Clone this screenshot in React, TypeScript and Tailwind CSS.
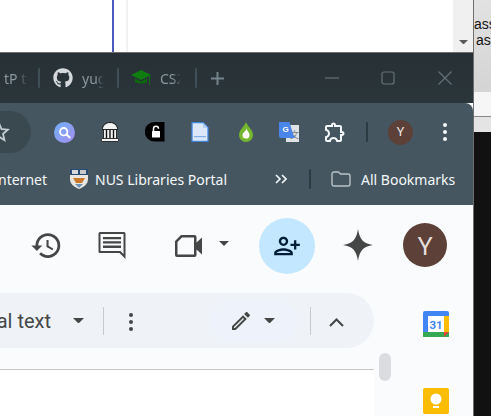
import React from "react";
import { FaGithub } from "react-icons/fa";

const Caret = ({ color = "#444746", w = 10 }: { color?: string; w?: number }) => (
  <svg width={w} height={w / 2} viewBox="0 0 10 5"><path d="M0 0h10L5 5z" fill={color} /></svg>
);

const Path = ({ d, size = 24, fill = "#444746", vb = "0 0 24 24", className = "" }: { d: string; size?: number; fill?: string; vb?: string; className?: string }) => (
  <svg width={size} height={size} viewBox={vb} className={className}><path d={d} fill={fill} /></svg>
);

const TabSep = () => <div className="w-[2px] h-[20px] rounded bg-[#3f4f58]" />;

export default function App() {
  return (
    <div className="w-[491px] h-[416px] overflow-hidden flex bg-white font-['Noto_Sans',sans-serif]">
      <div className="w-[474px] shrink-0 flex flex-col border-r border-[#6e6e6e]">
        {/* document behind the window */}
        <div className="h-[52px] flex bg-white">
          <div className="w-[112px]" />
          <div className="w-[2px] bg-[#4b5bbd]" />
          <div className="w-[12px]" />
          <div className="w-[2px] bg-[#f2f2f2]" />
          <div className="flex-1" />
          <div className="w-[20px] bg-[#f0f0f0] flex items-end justify-center pb-[8px]">
            <Caret color="#5a5a5a" w={9} />
          </div>
        </div>
        {/* browser window */}
        <div className="flex-1 flex flex-col border-t-[1px] border-[#6e6e6e]">
          <div className="h-[50px] bg-gradient-to-b from-[#263035] to-[#2b363c] flex items-center text-[#8b979e] text-[14px]">
            <span className="w-[38px] pl-[4px] whitespace-nowrap overflow-hidden [mask-image:linear-gradient(90deg,black_45%,transparent_72%)]">tP tea</span>
            <TabSep />
            <FaGithub className="ml-[13px] text-[#d5d9db]" size={20} />
            <span className="w-[22px] ml-[9px] overflow-hidden whitespace-nowrap [mask-image:linear-gradient(90deg,black_60%,transparent)]">yuggy</span>
            <div className="w-[13px]" />
            <TabSep />
            <svg className="ml-[12px]" width="20" height="18" viewBox="0 0 20 18">
              <path d="M10 1 20 6l-10 5L0 6z" fill="#0f7d0f" />
              <path d="M4 9.5v3.2C6 15 14 15 16 12.7V9.5l-6 3z" fill="#0b6b0b" />
              <path d="M18.6 7v9" stroke="#0f7d0f" strokeWidth="0.8" />
            </svg>
            <span className="w-[21px] ml-[9px] overflow-hidden whitespace-nowrap [mask-image:linear-gradient(90deg,black_60%,transparent)]">CS2103</span>
            <div className="w-[14px]" />
            <TabSep />
            <svg className="ml-[14px]" width="13" height="13" viewBox="0 0 13 13"><path d="M6.5 0v13M0 6.5h13" stroke="#75838b" strokeWidth="2" /></svg>
            <svg className="ml-[101px]" width="14" height="2" viewBox="0 0 14 2"><path d="M0 1h14" stroke="#66737a" strokeWidth="1.2" /></svg>
            <svg className="ml-[42px]" width="14" height="14" viewBox="0 0 14 14"><rect x="1" y="1" width="12" height="12" rx="2" fill="none" stroke="#66737a" strokeWidth="1.2" /></svg>
            <svg className="ml-[43px]" width="14" height="14" viewBox="0 0 14 14"><path d="M0.5 0.5l13 13M13.5 0.5l-13 13" stroke="#66737a" strokeWidth="1.1" /></svg>
          </div>
          <div className="h-[102px] bg-[#455660] rounded-tr-[8px] flex flex-col text-[#f4f8fa] overflow-hidden">
            <div className="pt-[8px] flex items-center">
              <div className="w-[31px] h-[42px] rounded-r-full bg-[#3a4850] flex items-center overflow-hidden">
                <svg className="-ml-[12px] shrink-0" width="22" height="22" viewBox="2 2 20 20"><path d="M22 9.24l-7.190-.62L12 2 9.190 8.630 2 9.240l5.460 4.730L5.820 21 12 17.270 18.180 21l-1.630-7.030L22 9.240zM12 15.400l-3.760 2.270 1-4.280-3.320-2.880 4.380-.38L12 6.100l1.710 4.040 4.380.38-3.320 2.880 1 4.280L12 15.400z" fill="#c3ccd0" /></svg>
              </div>
              <div className="w-[11px]" />
              <div className="w-[45px] flex justify-center">
                <svg width="21" height="21" viewBox="0 0 21 21">
                  <defs><linearGradient id="g" x1="0" y1="0" x2="1" y2="1"><stop offset="0" stopColor="#6fb2f7" /><stop offset="1" stopColor="#a58cf0" /></linearGradient></defs>
                  <circle cx="10.5" cy="10.5" r="10.5" fill="url(#g)" />
                  <circle cx="9.7" cy="9.7" r="3.7" fill="none" stroke="#fff" strokeWidth="1.8" />
                  <path d="M12.5 12.5l3.7 3.5" stroke="#fff" strokeWidth="2" />
                </svg>
              </div>
              <div className="w-[45px] flex justify-center">
                <svg width="18" height="20" viewBox="0 0 18 20">
                  <path d="M1.500 6.500C2 3 5 .5 9 .5s7 2.500 7.500 6V7.500h-15z" fill="#f2f2f2" stroke="#111" />
                  <rect x="2.500" y="7.500" width="13" height="9.500" fill="#f2f2f2" stroke="#111" strokeWidth=".8" />
                  <path d="M5.500 8v8.500M9 8v8.500M12.500 8v8.500" stroke="#111" strokeWidth="1.400" />
                  <rect x=".5" y="16.500" width="17" height="3" rx=".8" fill="#f2f2f2" stroke="#111" strokeWidth=".8" />
                </svg>
              </div>
              <div className="w-[45px] flex justify-center">
                <svg width="20" height="20" viewBox="0 0 20 20">
                  <path d="M9.500 0H19.500V19.500H9.500A9.750 9.750 0 0 1 9.500 0z" fill="#000" />
                  <rect x="7" y="9" width="8" height="6.500" rx=".5" fill="#fff" />
                  <path d="M8.500 9V6.800a2.500 2.500 0 0 1 5 0" fill="none" stroke="#fff" strokeWidth="1.500" />
                </svg>
              </div>
              <div className="w-[45px] flex justify-center">
                <svg width="18" height="20" viewBox="0 0 18 20">
                  <path d="M1 .7h11l5 5V19.300H1z" fill="#dbe8fb" stroke="#3f86dd" strokeWidth="1.300" />
                  <path d="M12 .7v5h5z" fill="#aecbf3" />
                  <rect x="3" y="14" width="12" height="1.200" fill="#7fb0ea" />
                </svg>
              </div>
              <div className="w-[47px] flex justify-center">
                <svg width="14" height="20" viewBox="0 0 14 20">
                  <path d="M7 0C9 5 14 8 14 13a7 7 0 0 1-14 0C0 8 5 5 7 0z" fill="#74b62e" />
                  <path d="M7 6c.5 2.500 3.500 4 3.500 7.200A3.500 3.500 0 0 1 3.500 13C3.500 11 5 11 5.300 9.500 6.500 10 7 8 7 6z" fill="#fff" />
                </svg>
              </div>
              <div className="w-[40px] flex justify-center">
                <svg width="21" height="21" viewBox="0 0 21 21">
                  <path d="M7 3h13v17H7z" fill="#dfe3e6" />
                  <text x="11" y="16" fontSize="9" fill="#777" fontFamily="Noto Sans CJK SC">文</text>
                  <path d="M0 0h10.500l4 13.500L16 16H2a2 2 0 0 1-2-2z" fill="#4a85ea" />
                  <text x="3.600" y="10" fontSize="8" fontWeight="700" fill="#fff" fontFamily="Liberation Sans">G</text>
                </svg>
              </div>
              <div className="w-[52px] flex justify-center">
                <Path size={24} fill="#f4f8fa" d="M10.500 4.500c.28 0 .5.22.5.5v2h6v6h2c.28 0 .5.22.5.5s-.22.5-.5.5h-2v6h-2.120c-.68-1.750-2.390-3-4.380-3s-3.700 1.250-4.380 3H4v-2.120c1.750-.68 3-2.390 3-4.380 0-1.990-1.240-3.700-2.990-4.380L4 7h6V5c0-.28.22-.5.5-.5m0-2C9.120 2.500 8 3.620 8 5H4c-1.100 0-1.990.9-1.990 2v3.800h.29c1.490 0 2.700 1.210 2.700 2.700s-1.210 2.700-2.700 2.700H2V20c0 1.100.9 2 2 2h3.800v-.3c0-1.490 1.210-2.700 2.700-2.700s2.700 1.210 2.700 2.700v.3H17c1.100 0 2-.9 2-2v-4c1.380 0 2.500-1.120 2.500-2.500S20.380 11 19 11V7c0-1.100-.9-2-2-2h-4c0-1.380-1.120-2.500-2.500-2.500z" />
              </div>
              <div className="ml-[5px] w-[2px] h-[20px] rounded bg-[#2c3a42]" />
              <div className="ml-[20px] w-[25px] h-[25px] rounded-full bg-[#5d4037] flex items-center justify-center text-[13px] text-[#f3eeec]">Y</div>
              <div className="ml-[30px] w-[4px] flex flex-col gap-[3px]">
                <div className="w-[4px] h-[4px] rounded-full bg-[#f4f8fa]" />
                <div className="w-[4px] h-[4px] rounded-full bg-[#f4f8fa]" />
                <div className="w-[4px] h-[4px] rounded-full bg-[#f4f8fa]" />
              </div>
            </div>
            <div className="mt-[12px] flex items-center h-[28px] text-[14px] whitespace-nowrap">
              <span className="w-[47px] flex justify-end">nternet</span>
              <svg className="ml-[23px]" width="18" height="20" viewBox="0 0 18 20">
                <path d="M0 0h18v10c0 5-4 8-9 10-5-2-9-5-9-10z" fill="#e9e6df" />
                <rect x="0" y="0" width="18" height="6" fill="#2a4a78" />
                <rect x="2" y="1" width="6" height="4" fill="#d9d9d9" />
                <rect x="10" y="1" width="6" height="4" fill="#c9c9c9" />
                <path d="M3 9l12 0-3 5-6 0z" fill="#c9792a" />
                <path d="M5 15h8l-4 4z" fill="#6d8fb3" />
              </svg>
              <span className="ml-[7px] w-[132px]">NUS Libraries Portal</span>
              <svg className="ml-[48px]" width="12" height="10" viewBox="0 0 12 10"><path d="M1 1l4 4-4 4M7 1l4 4-4 4" fill="none" stroke="#f4f8fa" strokeWidth="1.600" /></svg>
              <div className="ml-[22px] w-[2px] h-[20px] rounded bg-[#2c3a42]" />
              <svg className="ml-[20px]" width="20" height="16" viewBox="0 0 20 16"><path d="M1 3a2 2 0 0 1 2-2h4.500l2 2H17a2 2 0 0 1 2 2v8a2 2 0 0 1-2 2H3a2 2 0 0 1-2-2z" fill="none" stroke="#b9c2c7" strokeWidth="1.400" /></svg>
              <span className="ml-[10px]">All Bookmarks</span>
            </div>
          </div>
          {/* docs page */}
          <div className="flex-1 bg-[#fafbfd] flex flex-col overflow-hidden">
            <div className="h-[88px] shrink-0 flex items-center pb-[6px]">
              <Path className="ml-[30px] -mt-[2px]" size={33} d="M13 3a9 9 0 0 0-9 9H1l3.890 3.890.07.14L9 12H6c0-3.870 3.130-7 7-7s7 3.130 7 7-3.130 7-7 7c-1.930 0-3.680-.79-4.940-2.060l-1.420 1.420A8.954 8.954 0 0 0 13 21a9 9 0 0 0 0-18zm-1 5v5l4.280 2.540.72-1.210-3.500-2.080V8H12z" />
              <svg className="ml-[34px] -mt-[2px]" width="30" height="30" viewBox="0 0 30 30">
                <path d="M3 2h24a1.500 1.500 0 0 1 1.500 1.500V29l-6-6H3a1.500 1.500 0 0 1-1.500-1.500v-18A1.500 1.500 0 0 1 3 2zm.5 2v17h20l3 3V4z" fill="#444746" />
                <path d="M6 7h18v2.300H6zM6 11.300h18v2.300H6zM6 15.600h18v2.300H6z" fill="#444746" />
              </svg>
              <svg className="ml-[47px]" width="28" height="24" viewBox="0 0 28 24">
                <path d="M7 1h13.500a2 2 0 0 1 2 2v5.500L28 3.500v17L22.500 15.500V21a2 2 0 0 1-2 2H3a2 2 0 0 1-2-2V7zM8 3.500 3.500 8V20.500H20V3.500z" fill="#444746" />
              </svg>
              <div className="ml-[17px] mb-[5px]"><Caret w={10} /></div>
              <div className="ml-[30px] w-[56px] h-[56px] rounded-full bg-[#c2e7ff] flex items-center justify-center">
                <Path size={28} fill="#001d35" className="-scale-x-100" d="M15 12c2.210 0 4-1.790 4-4s-1.790-4-4-4-4 1.790-4 4 1.790 4 4 4zm0-6c1.100 0 2 .9 2 2s-.9 2-2 2-2-.9-2-2 .9-2 2-2zm0 8c-2.670 0-8 1.340-8 4v2h16v-2c0-2.660-5.330-4-8-4zm-6 4c.22-.72 3.310-2 6-2 2.700 0 5.800 1.290 6 2H9zm-3-3v-3h3v-2H6V7H4v3H1v2h3v3h2z" />
              </div>
              <svg className="ml-[28px] -mt-[2px]" width="30" height="32" viewBox="0 0 30 32"><path d="M15 0c1.500 10 5 14.500 15 16-10 1.500-13.500 6-15 16-1.500-10-5-14.500-15-16C10 14.500 13.500 10 15 0z" fill="#444746" /></svg>
              <div className="ml-[30px] -mt-[2px] w-[44px] h-[44px] rounded-full bg-[#5d4037] flex items-center justify-center text-[26px] text-[#e6dfdc]">Y</div>
            </div>
            <div className="flex flex-1 min-h-0">
              <div className="w-[374px] shrink-0 flex flex-col">
                <div className="h-[55px] bg-[#eff2f7] rounded-r-full flex items-center text-[#444746] shrink-0">
                  <span className="w-[51px] flex justify-end text-[20px] font-['Roboto',sans-serif] whitespace-nowrap">al text</span>
                  <div className="ml-[22px]"><Caret w={11} /></div>
                  <div className="ml-[19px] w-px h-[28px] bg-[#c7c9cc]" />
                  <div className="ml-[25px] w-[4px] flex flex-col gap-[3px] mt-[2px]">
                    <div className="w-[4px] h-[4px] rounded-full bg-[#444746]" />
                    <div className="w-[4px] h-[4px] rounded-full bg-[#444746]" />
                    <div className="w-[4px] h-[4px] rounded-full bg-[#444746]" />
                  </div>
                  <div className="ml-[78px] w-[86px] h-[40px] rounded-full bg-[#edf2fb] flex items-center pl-[18px]">
                    <Path size={24} d="M14.060 9.020l.92.92L5.920 19H5v-.92l9.060-9.060M17.660 3c-.25 0-.51.1-.7.29l-1.830 1.830 3.750 3.750 1.830-1.830c.39-.39.39-1.020 0-1.410l-2.340-2.340c-.2-.2-.45-.29-.71-.29zm-3.600 3.190L3 17.250V21h3.750L17.810 9.940l-3.750-3.750z" />
                    <div className="ml-[11px]"><Caret w={11} /></div>
                  </div>
                  <div className="ml-[13px] w-px h-[28px] bg-[#c7c9cc]" />
                  <svg className="ml-[18px] mt-[2px]" width="15" height="10" viewBox="0 0 15 10"><path d="M1 9l6.500-6.500L14 9" fill="none" stroke="#444746" strokeWidth="2" /></svg>
                </div>
                <div className="h-[22px] shrink-0 border-b border-[#c7c7c7]" />
                <div className="flex-1 bg-white" />
              </div>
              <div className="w-[99px] flex">
                <div className="ml-[5px] mt-[60px] w-[12px] h-[28px] rounded-full bg-[#dadce0]" />
                <div className="ml-[32px] flex flex-col pt-[18px] gap-[51px]">
                  <svg width="26" height="26" viewBox="0 0 26 26">
                    <rect width="26" height="26" rx="2" fill="#4285f4" />
                    <rect x="0" y="21" width="26" height="5" fill="#34a853" />
                    <rect x="21" y="5" width="5" height="16" fill="#fbbc04" />
                    <rect x="5" y="5" width="16" height="16" fill="#fff" />
                    <path d="M21 26l5-5h-5z" fill="#ea4335" />
                    <text x="6.500" y="17.500" fontSize="11.500" fontWeight="700" fill="#4285f4" fontFamily="Roboto">31</text>
                  </svg>
                  <svg width="26" height="26" viewBox="0 0 26 26">
                    <rect width="26" height="26" rx="2" fill="#fbbc04" />
                    <circle cx="13" cy="11" r="5.500" fill="#fff" />
                    <rect x="10" y="18" width="6" height="2" fill="#fff" />
                  </svg>
                </div>
              </div>
            </div>
          </div>
        </div>
      </div>
      {/* neighbouring window on the right */}
      <div className="flex-1 flex flex-col overflow-hidden">
        <div className="h-[92px] bg-gradient-to-b from-[#e2e2e2] to-[#d4d4d4] pt-[16px] font-['Liberation_Sans',sans-serif] text-[14px] leading-[16px] text-[#111] whitespace-nowrap">
          <div>ass</div>
          <div className="ml-[2px]">ass</div>
        </div>
        <div className="h-[24px] bg-[#f6f6f6]" />
        <div className="h-[16px] bg-[#e4e4e4] border-t border-[#888]" />
        <div className="flex-1 bg-[#111]" />
      </div>
    </div>
  );
}
